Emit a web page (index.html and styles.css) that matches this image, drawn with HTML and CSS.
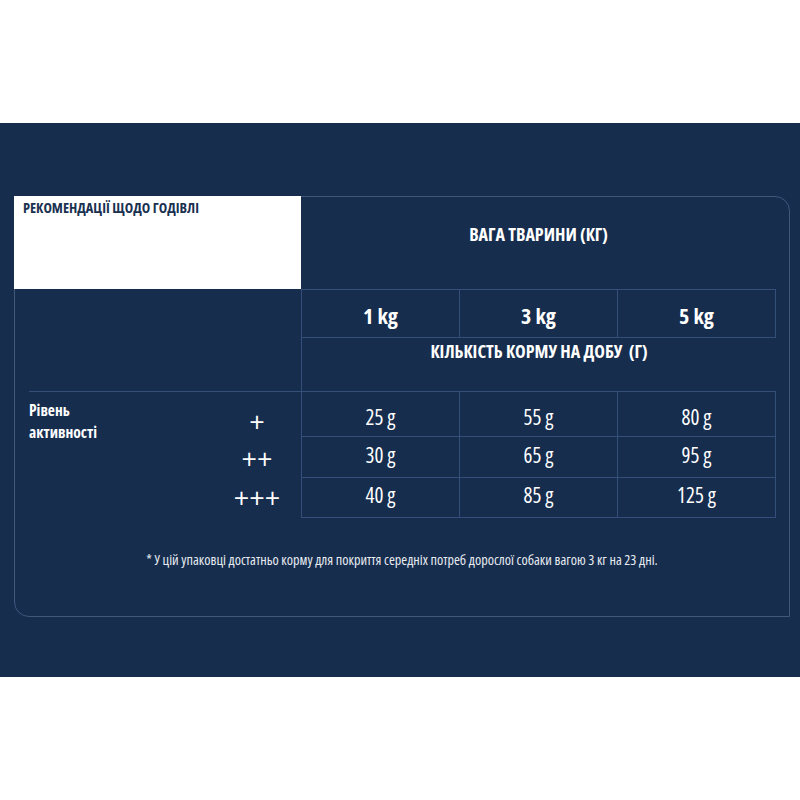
FILE: index.html
```html
<!DOCTYPE html>
<html lang="uk">
<head>
<meta charset="utf-8">
<title>Рекомендації щодо годівлі</title>
<link rel="stylesheet" href="styles.css">
</head>
<body>
<section class="band">
  <div class="card">
    <div class="grid">
      <div class="title-cell">РЕКОМЕНДАЦІЇ ЩОДО ГОДІВЛІ</div>
      <div class="weight-head">ВАГА ТВАРИНИ (КГ)</div>

      <div class="wt c1">1 kg</div>
      <div class="wt c2">3 kg</div>
      <div class="wt c3">5 kg</div>

      <div class="amount-head">КІЛЬКІСТЬ КОРМУ НА ДОБУ&nbsp; (Г)</div>

      <div class="activity">Рівень<br>активності</div>

      <div class="plus r1">+</div>
      <div class="val c1 r1">25 g</div>
      <div class="val c2 r1">55 g</div>
      <div class="val c3 r1">80 g</div>

      <div class="plus r2">++</div>
      <div class="val c1 r2">30 g</div>
      <div class="val c2 r2">65 g</div>
      <div class="val c3 r2">95 g</div>

      <div class="plus r3">+++</div>
      <div class="val c1 r3">40 g</div>
      <div class="val c2 r3">85 g</div>
      <div class="val c3 r3">125 g</div>
    </div>
    <p class="note">* У цій упаковці достатньо корму для покриття середніх потреб дорослої собаки вагою 3 кг на 23 дні.</p>
  </div>
</section>
</body>
</html>
```
FILE: styles.css
```css
* { box-sizing: border-box; }

html, body {
  margin: 0;
  padding: 0;
  background: #ffffff;
}

body {
  font-family: "Open Sans", "DejaVu Sans", sans-serif;
  font-stretch: 75%;
  color: #ffffff;
}

.band {
  margin-top: 123px;
  height: 554px;
  background: #162d4e;
  padding: 73px 10px 0 14px;
}

.card {
  width: 776px;
  height: 421px;
  border: 1px solid #3f587c;
  border-radius: 0 15px 0 15px;
}

.grid {
  display: grid;
  grid-template-columns: 198px 88px 158px 158px 159px 1fr;
  grid-template-rows: 92px 49px 53px 46px 41px 40px;
}

.title-cell {
  grid-column: 1 / 3;
  grid-row: 1;
  margin: -1px 0 0 -1px;
  background: #ffffff;
  color: #1b3151;
  font-size: 14.3px;
  font-weight: 700;
  line-height: 20px;
  padding: 2px 0 0 9px;
}

.weight-head {
  grid-column: 3 / 6;
  grid-row: 1;
  text-align: center;
  font-size: 18px;
  font-weight: 700;
  line-height: 24px;
  padding-top: 25px;
}

.wt {
  grid-row: 2;
  border-top: 1px solid #34507a;
  border-bottom: 1px solid #34507a;
  border-left: 1px solid #34507a;
  display: flex;
  align-items: center;
  justify-content: center;
  font-size: 22px;
  font-weight: 700;
  line-height: 26px;
  padding-top: 3px;
}

.c1 { grid-column: 3; }
.c2 { grid-column: 4; }
.c3 { grid-column: 5; border-right: 1px solid #34507a; }

.amount-head {
  grid-column: 3 / 6;
  grid-row: 3;
  border-left: 1px solid #34507a;
  text-align: center;
  font-size: 18px;
  font-weight: 700;
  line-height: 24px;
  padding-top: 1px;
  white-space: pre;
}

.activity {
  grid-column: 1;
  grid-row: 4 / 7;
  margin-left: 14px;
  border-top: 1px solid #34507a;
  font-size: 15.5px;
  font-weight: 700;
  line-height: 22px;
  padding-top: 7px;
}

.plus {
  grid-column: 2;
  display: flex;
  align-items: center;
  justify-content: center;
  font-size: 27px;
  font-weight: 400;
  font-stretch: 100%;
  line-height: 30px;
}

.val {
  border-left: 1px solid #34507a;
  border-bottom: 1px solid #34507a;
  display: flex;
  align-items: center;
  justify-content: center;
  font-size: 21px;
  font-weight: 400;
  line-height: 26px;
}

.r1 { grid-row: 4; border-top: 1px solid #34507a; }
.r2 { grid-row: 5; }
.r3 { grid-row: 6; }

.val.r1 { padding-top: 5px; }
.val.r2 { padding-bottom: 4px; }
.val.r3 { padding-bottom: 5px; }

.plus.r1 { padding-top: 14px; }
.plus.r2 { padding-top: 3px; }

.note {
  margin: 0;
  padding-top: 33px;
  text-align: center;
  font-size: 14.2px;
  font-weight: 500;
  line-height: 18px;
  color: #e8ebf0;
}
```
